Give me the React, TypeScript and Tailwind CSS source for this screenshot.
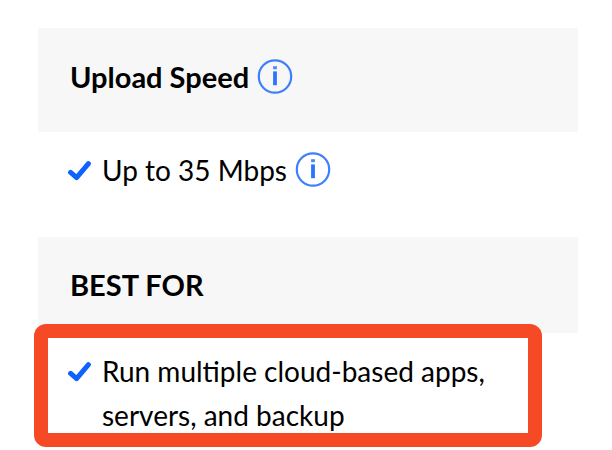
import type { ReactNode } from 'react';

const CheckIcon = () => (
  <svg className="w-6 h-11 shrink-0" viewBox="0 0 24 44" fill="none" aria-hidden="true">
    <path d="M2.6 24.4L8.6 29.6L20.4 15.6" stroke="#0F62FE" strokeWidth="5" strokeLinecap="round" strokeLinejoin="round" />
  </svg>
);

const InfoButton = ({ label }: { label: string }) => (
  <button type="button" aria-label={label} className="shrink-0 cursor-pointer">
    <svg className="w-9 h-9" viewBox="0 0 36 36" fill="none">
      <circle cx="18" cy="17.5" r="16.2" stroke="#3D7FFC" strokeWidth="2.2" />
      <path d="M18 12.4V26.2" stroke="#2C73FE" strokeWidth="3.8" />
      <path d="M18 7.2V10.2" stroke="#4A88FE" strokeWidth="3.8" />
    </svg>
  </button>
);

const Feature = ({ children }: { children: ReactNode }) => (
  <li className="flex items-start gap-2.5">
    <CheckIcon />
    {children}
  </li>
);

export default function App() {
  return (
    <main className="min-h-screen bg-white pt-7 pb-3 pl-[38px] pr-[34px] font-['Lato',sans-serif] text-[28px] leading-[44px] text-black">
      <section>
        <div className="flex items-center gap-2 bg-[#f7f7f7] px-8 pt-[27px] pb-[33px]">
          <h2 className="text-[29px] font-bold">Upload Speed</h2>
          <InfoButton label="About upload speed" />
        </div>
        <ul className="px-[30px] pt-4 pb-[45px]">
          <Feature>
            <div className="flex items-center gap-2">
              <span>Up to 35 Mbps</span>
              <InfoButton label="About the 35 Mbps limit" />
            </div>
          </Feature>
        </ul>
      </section>

      <section>
        <div className="bg-[#f7f7f7] px-8 py-[26px]">
          <h2 className="text-[29px] font-bold">BEST FOR</h2>
        </div>
        <div className="relative">
          <ul className="relative z-10 pl-[30px] pr-16 pt-4">
            <Feature>
              <span>Run multiple cloud-based apps, servers, and backup</span>
            </Feature>
          </ul>
          {/* Highlight frame, overlaps the heading bar above */}
          <div className="absolute -top-[9px] -bottom-2.5 -left-1 right-9 rounded-xl bg-[#f64926] p-3.5">
            <div className="h-full bg-white" />
          </div>
        </div>
      </section>
    </main>
  );
}
